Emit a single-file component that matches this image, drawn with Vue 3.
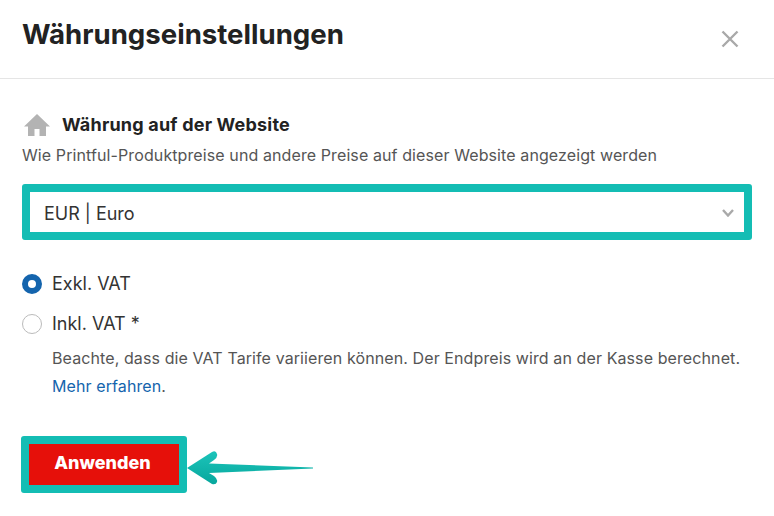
<template>
  <div class="modal">
    <div class="modal-header">
      <h2 class="title">Währungseinstellungen</h2>
      <button class="close-button" aria-label="Schließen">
        <svg width="20" height="20" viewBox="0 0 20 20">
          <path d="M2.5 2.5 L17.5 17.5 M17.5 2.5 L2.5 17.5" stroke="#a9a9a9" stroke-width="2.4" fill="none" />
        </svg>
      </button>
    </div>
    <div class="modal-body">
      <div class="section-title">
        <svg class="home-icon" width="26" height="22" viewBox="0 0 26 22">
          <path d="M13 0 L26 12.5 H22 V22 H15.5 V15 H10.5 V22 H4 V12.5 H0 Z" fill="#b3b3b3" />
        </svg>
        <strong class="section-name">Währung auf der Website</strong>
      </div>
      <p class="section-text">Wie Printful-Produktpreise und andere Preise auf dieser Website angezeigt werden</p>

      <div class="select-box">
        <span>EUR | Euro</span>
        <svg width="12" height="8" viewBox="0 0 12 8">
          <path d="M1 1 L6 6.5 L11 1" stroke="#a9a9a9" stroke-width="2.4" fill="none" />
        </svg>
      </div>

      <div class="radio-row">
        <span class="radio checked"></span>
        <span>Exkl. VAT</span>
      </div>
      <div class="radio-row second">
        <span class="radio"></span>
        <span>Inkl. VAT *</span>
      </div>
      <p class="note">
        Beachte, dass die VAT Tarife variieren können. Der Endpreis wird an der Kasse berechnet.<br />
        <a href="#" class="more-link">Mehr erfahren</a>.
      </p>

      <div class="actions">
        <button class="apply-button">Anwenden</button>
        <svg class="arrow" width="128" height="40" viewBox="0 0 128 40">
          <defs>
            <linearGradient id="arrowFill" x1="0" y1="0" x2="0" y2="1">
              <stop offset="0" stop-color="#1cc4ba" />
              <stop offset="1" stop-color="#07a79d" />
            </linearGradient>
          </defs>
          <path d="M1 20 L26 4 Q30 2 31 6 Q32 9 28 12 L23 15.5 L127 19.5 V20.5 L23 25 L28 28 Q32 31 31 34 Q30 37 26 36 Z" fill="url(#arrowFill)" />
        </svg>
      </div>
    </div>
  </div>
</template>

<script setup>
</script>

<style>
html,
body {
  margin: 0;
  background: #fff;
}
</style>

<style scoped>
.modal {
  width: 774px;
  height: 516px;
  overflow: hidden;
  background: #fff;
  font-family: "Inter", "Liberation Sans", sans-serif;
  color: #2b2b2b;
}
.modal-header {
  display: flex;
  align-items: center;
  justify-content: space-between;
  height: 78px;
  padding: 0 34px 0 22px;
  border-bottom: 1px solid #e5e5e5;
}
.title {
  margin: 0 0 10px;
  font-size: 27.6px;
  font-weight: 700;
  color: #222;
}
.close-button {
  display: flex;
  padding: 0;
  border: none;
  background: none;
}
.modal-body {
  padding: 35px 22px 0;
}
.section-title {
  display: flex;
  align-items: center;
  gap: 12px;
  font-size: 18px;
  letter-spacing: 0.2px;
  color: #222;
}
.section-name {
  margin-top: -2px;
}
.home-icon {
  margin-left: 2px;
}
.section-text {
  margin: 9px 0 0;
  font-size: 16px;
  letter-spacing: 0.1px;
  line-height: 20px;
  color: #555;
}
.select-box {
  display: flex;
  align-items: center;
  justify-content: space-between;
  box-sizing: border-box;
  width: 730px;
  height: 56px;
  margin-top: 19px;
  padding: 2px 10px 0 14px;
  border: 8px solid #14bdb4;
  border-radius: 3px;
  font-size: 18px;
  color: #333;
}
.radio-row {
  display: flex;
  align-items: center;
  gap: 10px;
  margin-top: 33px;
  font-size: 18px;
  line-height: 22px;
  color: #333;
}
.radio-row.second {
  margin-top: 18px;
}
.radio {
  box-sizing: border-box;
  width: 20px;
  height: 20px;
  border: 1px solid #bbb;
  border-radius: 50%;
}
.radio.checked {
  border: 6px solid #1464ad;
}
.note {
  margin: 9px 0 0 30px;
  font-size: 16px;
  letter-spacing: 0.1px;
  line-height: 28px;
  color: #555;
}
.more-link {
  color: #1464ad;
  text-decoration: none;
}
.actions {
  display: flex;
  align-items: center;
  margin-top: 36px;
}
.apply-button {
  box-sizing: border-box;
  width: 166px;
  height: 57px;
  margin-left: -1px;
  padding: 0 3px 5px 0;
  border: 8px solid #14bdb4;
  border-radius: 3px;
  background: #e6100a;
  color: #fff;
  font-family: inherit;
  font-size: 18px;
  font-weight: 800;
}
.arrow {
  margin: 6px 0 0 -1px;
}
</style>
